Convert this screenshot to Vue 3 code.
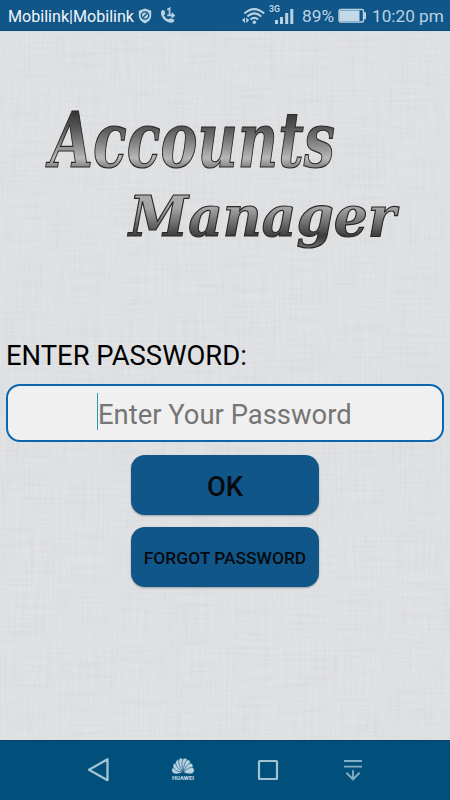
<script setup>
const label = 'ENTER PASSWORD:'
const petals = [-80, -57, -34, -12, 12, 34, 57, 80]
</script>

<template>
  <div class="screen">
    <header class="status">
      <span class="carrier">Mobilink|Mobilink</span>
      <svg class="shield" width="14" height="16" viewBox="0 0 14 16">
        <path d="M7 0.6 13.2 2.7V7.5C13.2 11.3 10.5 13.8 7 15.4 3.5 13.8.8 11.3.8 7.5V2.7Z" fill="#b9d2e3" />
        <circle cx="7" cy="7.5" r="3.7" fill="none" stroke="#115688" stroke-width="1.3" />
        <path d="M4.5 10 9.5 5" stroke="#115688" stroke-width="1.3" />
      </svg>
      <svg class="call" width="16" height="17" viewBox="0 0 16 17">
        <path d="M2 3 4.6 3.6 5.3 7 3.8 8.2Q5.2 11.2 8.3 12.4L9.9 11.2 14.4 12.6 13.7 15.1Q11 16.4 7.8 15 2 12.2 1 7 .7 4.3 2 3Z" fill="#b9d2e3" />
        <path d="M7.2 2.8 9.6 1.4V8.4M7.2 8.4H14.2M11.7 6.2 14 8.4 11.7 10.6" fill="none" stroke="#b9d2e3" stroke-width="1.7" />
      </svg>
      <span class="grow"></span>
      <svg class="wifi" width="24" height="18" viewBox="0 0 24 18">
        <g fill="none" stroke="#b9d2e3" stroke-width="2">
          <path d="M2.4 6.5Q12-2.3 22.2 6.5M5.4 9.5Q12.3 3.3 19.2 9.5M8.5 12.5Q12.3 9.2 16.1 12.5" />
        </g>
        <circle cx="12.3" cy="15.2" r="1.8" fill="#b9d2e3" />
        <path d="M3 10.5V16L0 13ZM4.2 10.5V16L7.2 13Z" fill="#b9d2e3" />
      </svg>
      <svg class="signal" width="26" height="22" viewBox="0 0 26 22">
        <text x="0" y="8.7" class="net" textLength="11" lengthAdjust="spacingAndGlyphs">3G</text>
        <path d="M6 17h3v4H6ZM11 14h3v7h-3ZM16.2 10h3v11h-3ZM21.3 6h3v15h-3Z" fill="#b9d2e3" />
      </svg>
      <span class="pct">89%</span>
      <svg class="battery" width="29" height="16" viewBox="0 0 29 16">
        <rect x="1" y="1.5" width="24.5" height="12.5" rx="1.5" fill="none" stroke="#b9d2e3" stroke-width="1.4" />
        <rect x="1.5" y="2.5" width="20" height="10.5" fill="#c4d9e7" />
        <path d="M26 4.2h2v7h-2Z" fill="#b9d2e3" />
      </svg>
      <span class="clock">10:20 pm</span>
    </header>

    <main class="content">
      <svg class="linen" width="450" height="709" aria-hidden="true">
        <defs>
          <filter id="weave-h" x="0" y="0" width="100%" height="100%" color-interpolation-filters="sRGB">
            <feTurbulence type="fractalNoise" baseFrequency="0.018 0.42" numOctaves="2" seed="4" />
            <feColorMatrix values="0 0 0 0 .5  0 0 0 0 .51  0 0 0 0 .53  .5 0 0 0 -.2" />
          </filter>
          <filter id="weave-v" x="0" y="0" width="100%" height="100%" color-interpolation-filters="sRGB">
            <feTurbulence type="fractalNoise" baseFrequency="0.42 0.018" numOctaves="2" seed="9" />
            <feColorMatrix values="0 0 0 0 .5  0 0 0 0 .51  0 0 0 0 .53  .5 0 0 0 -.2" />
          </filter>
        </defs>
        <rect width="450" height="709" filter="url(#weave-h)" opacity=".21" />
        <rect width="450" height="709" filter="url(#weave-v)" opacity=".21" />
      </svg>

      <svg class="logo" width="450" height="299" viewBox="0 31 450 299">
        <defs>
          <linearGradient id="steel-a" gradientUnits="userSpaceOnUse" x1="0" y1="110" x2="0" y2="168">
            <stop offset="0" stop-color="#333" />
            <stop offset=".3" stop-color="#555" />
            <stop offset=".55" stop-color="#808080" />
            <stop offset=".83" stop-color="#b8b8b8" />
            <stop offset="1" stop-color="#808080" />
          </linearGradient>
          <linearGradient id="steel-b" gradientUnits="userSpaceOnUse" x1="0" y1="194" x2="0" y2="250">
            <stop offset="0" stop-color="#aaa" />
            <stop offset=".25" stop-color="#a4a4a4" />
            <stop offset=".55" stop-color="#686868" />
            <stop offset=".75" stop-color="#3c3c3c" />
            <stop offset="1" stop-color="#777" />
          </linearGradient>
        </defs>
        <g class="metal">
          <text x="50" y="166.5" font-size="77" textLength="285" lengthAdjust="spacingAndGlyphs" fill="url(#steel-a)">Accounts</text>
          <text x="129" y="235.5" font-size="56.5" textLength="267" lengthAdjust="spacingAndGlyphs" fill="url(#steel-b)">Manager</text>
        </g>
      </svg>

      <div class="form">
        <label class="label">{{ label }}</label>
        <div class="field"><span class="caret"></span><span class="hint">Enter Your Password</span></div>
        <button class="btn ok">OK</button>
        <button class="btn forgot">FORGOT PASSWORD</button>
      </div>
    </main>

    <nav class="nav">
      <svg class="back" width="24" height="26" viewBox="0 0 24 26">
        <path d="M20.5 2.3V23.2L2 12.8Z" fill="none" stroke="#a3c2d2" stroke-width="2.3" stroke-linejoin="round" />
      </svg>
      <svg class="home" width="26" height="26" viewBox="0 0 26 26">
        <g fill="#b9d2e0" transform="translate(0 -4) scale(1 1.28)">
          <path v-for="a in petals" :key="a" d="M13 14.8C10.8 11 9.6 6.5 11.4 4.4Q13 2.8 14.6 4.4C16.4 6.5 15.2 11 13 14.8Z" :transform="`rotate(${a} 13 15.2)`" stroke="#01507c" stroke-width=".5" />
        </g>
        <path d="M0 18H26V26H0Z" fill="#01507c" />
        <text x="2" y="22.8" class="brand" textLength="22" lengthAdjust="spacingAndGlyphs">HUAWEI</text>
      </svg>
      <svg class="apps" width="22" height="22" viewBox="0 0 22 22">
        <rect x="2" y="2" width="18" height="18" rx=".8" fill="none" stroke="#a3c2d2" stroke-width="2.2" />
      </svg>
      <svg class="recent" width="20" height="22" viewBox="0 0 20 22">
        <path d="M1 2H19M1 7.6H19M10 11.3V20M3.4 13.8 10 20.3 16.6 13.8" fill="none" stroke="#82adc3" stroke-width="1.9" />
      </svg>
    </nav>
  </div>
</template>

<style>
body { margin: 0; }
</style>

<style scoped>
.screen {
  width: 450px;
  height: 800px;
  display: flex;
  flex-direction: column;
  overflow: hidden;
  font-family: Roboto, "Liberation Sans", sans-serif;
  background: #e1e2e4;
}
.status {
  box-sizing: border-box;
  height: 31px;
  flex: none;
  display: flex;
  align-items: center;
  padding: 2px 8px 0 8px;
  background: #115688;
  border-bottom: 1px solid #084a7c;
  color: #b9d2e3;
  white-space: nowrap;
}
.carrier { width: 126px; color: #f0f5f8; font-size: 16.1px; }
.shield { margin-left: 4px; }
.call { margin: -2px 0 0 8px; }
.grow { flex: 1; }
.wifi { margin-right: 3px; }
.signal { margin-top: -4px; }
.net { font: 700 8.5px Roboto, sans-serif; fill: #b9d2e3; }
.pct { width: 33px; margin-left: 7px; font-size: 17.3px; }
.battery { margin-left: 3px; }
.clock { width: 70px; margin-left: 5px; font-size: 17.2px; }
.content {
  position: relative;
  height: 709px;
  flex: none;
}
.linen { position: absolute; inset: 0; }
.logo { display: block; position: relative; }
.metal {
  font-family: "DejaVu Serif", serif;
  font-style: italic;
  font-weight: 700;
  stroke: #292929;
  stroke-width: 1.2;
}
.form {
  position: relative;
  display: flex;
  flex-direction: column;
  align-items: center;
  padding: 0 6px;
}
.label {
  align-self: flex-start;
  height: 54px;
  line-height: 53px;
  font-size: 27.4px;
  color: #000;
}
.field {
  box-sizing: border-box;
  width: 438px;
  height: 58px;
  display: flex;
  align-items: center;
  padding-left: 89px;
  border: 2px solid #0c66ae;
  border-radius: 14px;
  background: #f0f0f0;
  margin-bottom: 13px;
}
.caret { width: 1px; height: 37px; margin-top: -3px; background: #2a9aa8; }
.hint { font-size: 27.4px; color: #757575; white-space: nowrap; padding-top: 3px; }
.btn {
  width: 188px;
  height: 60px;
  padding: 4px 0 0;
  border: 0;
  border-radius: 14px;
  background: #115688;
  color: #060a0e;
  font-family: inherit;
  font-weight: 500;
  box-shadow: 0 1px 2px rgba(0, 0, 0, 0.3);
}
.ok { font-size: 27.4px; margin-bottom: 12px; }
.forgot { padding-top: 2px; font-size: 17.4px; white-space: nowrap; }
.nav {
  box-sizing: border-box;
  height: 60px;
  flex: none;
  display: flex;
  align-items: center;
  padding-left: 87px;
  background: #01507c;
  border-top: 1px solid #02426b;
}
.back { margin-right: 59px; margin-top: -1px; }
.home { margin-right: 61px; margin-top: -1px; }
.apps { margin-right: 64px; margin-top: -1px; }
.recent { margin-top: -2px; }
.brand { font: 900 6px Roboto, sans-serif; fill: #b9d2e0; }
</style>
